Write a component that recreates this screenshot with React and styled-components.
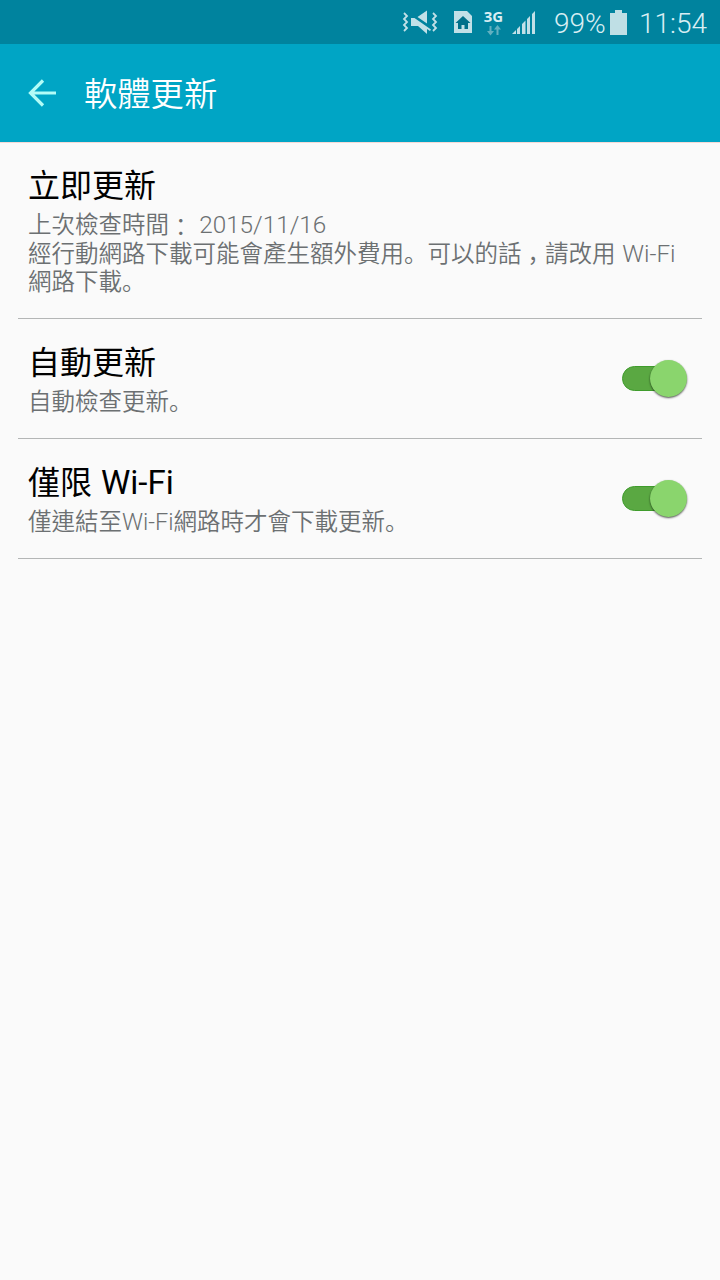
import React from 'react';
import styled, { createGlobalStyle } from 'styled-components';

const GlobalStyle = createGlobalStyle`
  * { box-sizing: border-box; }
  body {
    margin: 0;
    background: #fafafa;
    font-family: Roboto, "Noto Sans CJK TC", sans-serif;
  }
`;

const Screen = styled.div`
  width: 720px;
  min-height: 1280px;
  background: #fafafa;
`;

const StatusBar = styled.div`
  display: flex;
  align-items: center;
  height: 44px;
  padding: 0 12px 0 402px;
  background: #00839e;
  color: #d9eef3;
  white-space: nowrap;

  svg { display: block; flex: none; }
`;

const Vibrate = styled.svg`
  margin-right: 15px;
`;

const Sim = styled.svg`
  margin-right: 10px;
`;

const Network = styled.div`
  display: flex;
  flex-direction: column;
  align-items: center;
  width: 21px;
  height: 28px;
  margin-right: 8px;
`;

const NetworkLabel = styled.span`
  font: 700 15px/16px "Open Sans", sans-serif;
  height: 17px;
`;

const Signal = styled.svg`
  margin-right: 18px;
`;

const StatusText = styled.span`
  font-size: 28px;
  font-weight: 300;
  line-height: 44px;
  padding-top: 4px;
  width: ${(p) => p.$width}px;
`;

const Battery = styled.svg`
  margin: 0 12px 0 6px;
`;

const AppBar = styled.header`
  display: flex;
  align-items: center;
  height: 99px;
  padding: 0 28px;
  background: #00a5c5;
  border-bottom: 1px solid #f5d9d6;
`;

const BackButton = styled.button`
  display: flex;
  width: 28px;
  height: 28px;
  margin: 0 28px 0 0;
  padding: 0;
  border: 0;
  background: none;
`;

const Title = styled.h1`
  margin: 0;
  padding-top: 3px;
  color: #fff;
  font-size: 33.3px;
  font-weight: 350;
  line-height: 40px;
`;

const List = styled.main`
  padding: 0 18px;
`;

const Row = styled.section`
  display: flex;
  align-items: center;
  height: ${(p) => p.$height}px;
  padding: 2px 10px 0;
  border-bottom: 1px solid #b4b6b6;
`;

const RowText = styled.div`
  flex: 1;
`;

const RowTitle = styled.h2`
  margin: 0;
  color: #000;
  font-size: 32px;
  font-weight: 370;
  line-height: 40px;
`;

const RowSummary = styled.p`
  margin: 5px 0 0;
  color: #6c7072;
  font-size: 23.5px;
  font-weight: 350;
  line-height: 28.5px;
`;

const Latin = styled.span`
  margin-left: 1px;
  font-size: 1.033em;
  line-height: 0;
`;

const Stop = styled.span`
  font-family: "Noto Sans CJK JP", sans-serif;
  line-height: 0;
`;

const Comma = styled(Stop)`
  margin: 0 -6px 0 6px;
`;

const Colon = styled.span`
  line-height: 0;
  vertical-align: -3px;
`;

const Switch = styled.button`
  display: flex;
  align-items: center;
  justify-content: flex-end;
  width: 65px;
  height: 40px;
  margin: -2px 5px 0 0;
  padding: 0;
  border: 0;
  background: none;
`;

const Track = styled.span`
  flex: 1;
  height: 25px;
  margin-right: -20px;
  border: 1px solid #3f9c2c;
  border-radius: 13px;
  background: #5aa842;
`;

const Thumb = styled.span`
  position: relative;
  width: 37px;
  height: 37px;
  border-radius: 50%;
  background: #8ad56d;
  box-shadow: 0 1px 2px rgba(0, 0, 0, 0.65);
`;

const Toggle = () => (
  <Switch type="button" role="switch" aria-checked="true">
    <Track />
    <Thumb />
  </Switch>
);

export default function App() {
  return (
    <Screen>
      <GlobalStyle />
      <StatusBar>
        <Vibrate width="36" height="26" viewBox="0 0 36 26" fill="none">
          <path d="M2 4l3 3-3 3 3 3-3 3 3 3-3 3M31 4l3 3-3 3 3 3-3 3 3 3-3 3" stroke="#c1e0e7" strokeWidth="1.800" />
          <path d="M9 9h3.500L29 20.500l-1 1.500-3-2V25l-9-8H9zM15.500 8L25 1.500v13z" fill="#c1e0e7" />
        </Vibrate>
        <Sim width="20" height="24" viewBox="0 0 20 24">
          <path d="M1 1h13l5 5v17H1z" fill="#c1e0e7" />
          <path d="M10 6l7.500 7h-2.500v6h-3.500v-4h-3v4H5v-6H2.500z" fill="#00708a" />
        </Sim>
        <Network>
          <NetworkLabel>3G</NetworkLabel>
          <svg width="14" height="11" viewBox="0 0 14 11" fill="#62b0c0">
            <path d="M2.500 1h2v5H7l-3.500 4.500L0 6h2.500z" />
            <path d="M9.500 10V4.500H7L10.500 0 14 4.500h-2.500V10z" />
          </svg>
        </Network>
        <Signal width="24" height="24" viewBox="0 0 24 24" fill="#c1e0e7">
          <path d="M0 24l4-4v4zM5 19l3-3v8H5zM10 14l3.500-3.500V24H10zM15 9l3-3v18h-3zM20 4l3-3v23h-3z" />
        </Signal>
        <StatusText $width={50}>99%</StatusText>
        <Battery width="17" height="25" viewBox="0 0 17 25">
          <path d="M5 0h7v3h5v22H0V3h5z" fill="#bfdfe5" />
        </Battery>
        <StatusText $width={68}>11:54</StatusText>
      </StatusBar>
      <AppBar>
        <BackButton type="button" aria-label="返回">
          <svg width="28" height="28" viewBox="0 0 28 28" fill="none" stroke="#b2fcf7" strokeWidth="3.200">
            <path d="M28 14H3M15 1.500L2.500 14 15 26.500" />
          </svg>
        </BackButton>
        <Title>軟體更新</Title>
      </AppBar>
      <List>
        <Row $height={176}>
          <RowText>
            <RowTitle>立即更新</RowTitle>
            <RowSummary>
              上次檢查時間<Colon>：</Colon> <Latin>2015/11/16</Latin>
              <br />
              經行動網路下載可能會產生額外費用<Stop>。</Stop>可以的話<Comma>，</Comma>請改用 <Latin>Wi-Fi</Latin> 網路下載<Stop>。</Stop>
            </RowSummary>
          </RowText>
        </Row>
        <Row $height={120}>
          <RowText>
            <RowTitle>自動更新</RowTitle>
            <RowSummary>自動檢查更新<Stop>。</Stop></RowSummary>
          </RowText>
          <Toggle />
        </Row>
        <Row $height={120}>
          <RowText>
            <RowTitle>僅限 <Latin>Wi-Fi</Latin></RowTitle>
            <RowSummary>僅連結至Wi-Fi網路時才會下載更新<Stop>。</Stop></RowSummary>
          </RowText>
          <Toggle />
        </Row>
      </List>
    </Screen>
  );
}
